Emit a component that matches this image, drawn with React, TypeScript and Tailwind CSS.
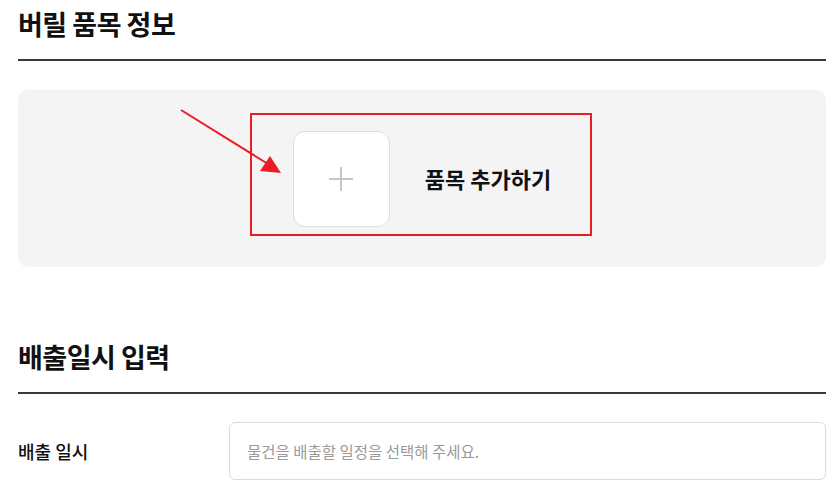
const FONT = "[font-family:'Noto_Sans_CJK_KR','Noto_Sans',sans-serif]";

function SectionTitle({ children, className = "" }: { children: string; className?: string }) {
  return (
    <div className={className}>
      <h2 className="pt-[6px] text-[27px] font-bold leading-[36px] tracking-[-0.5px] text-[#111]">{children}</h2>
      <div className="mt-[17px] h-[2px] bg-[#3a3a3a]" />
    </div>
  );
}

export default function App() {
  return (
    <div className={`min-h-screen bg-white pl-[18px] pr-[7px] ${FONT}`}>
      <SectionTitle>버릴 품목 정보</SectionTitle>

      <section className="relative mt-[29px] flex h-[177px] items-center justify-center gap-[35px] rounded-[10px] bg-[#f4f4f4]">
        <button
          type="button"
          className="flex h-[96px] w-[97px] items-center justify-center rounded-[12px] border border-[#dedede] bg-white"
        >
          <svg width="26" height="26" viewBox="0 0 26 26">
            <path d="M13 1v24M1 13h24" stroke="#c6c6c6" strokeWidth="2" />
          </svg>
        </button>
        <span className="text-[22px] font-semibold text-[#111]">품목 추가하기</span>

        {/* annotation */}
        <div className="pointer-events-none absolute left-[232px] top-[23px] h-[123px] w-[342px] border-2 border-[#ec1c24]" />
        <svg
          className="pointer-events-none absolute left-0 top-0"
          width="300"
          height="100"
          viewBox="18 89 300 100"
        >
          <line x1="181" y1="109" x2="268" y2="163" stroke="#ec1c24" strokeWidth="2" />
          <polygon points="281,172 270,155 260,170" fill="#ec1c24" />
        </svg>
      </section>

      <SectionTitle className="mt-[66px]">배출일시 입력</SectionTitle>

      <div className="mt-[28px] flex items-center">
        <label className="w-[211px] shrink-0 text-[18px] font-medium text-[#111]">배출 일시</label>
        <input
          type="text"
          placeholder="물건을 배출할 일정을 선택해 주세요."
          className="h-[58px] flex-1 rounded-[6px] border border-[#dcdcdc] bg-white px-[17px] text-[15.5px] text-[#333] outline-none placeholder:text-[#9a9a9a]"
        />
      </div>
    </div>
  );
}
